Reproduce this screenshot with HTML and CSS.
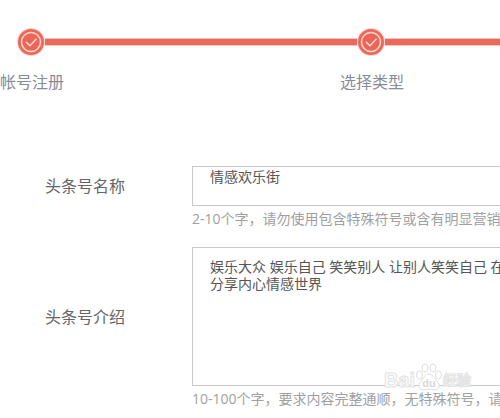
FILE: index.html
```html
<!DOCTYPE html>
<html lang="zh-CN">
<head>
<meta charset="UTF-8">
<meta name="viewport" content="width=device-width, initial-scale=1.0">
<title>头条号注册</title>
<link rel="stylesheet" href="styles.css">
</head>
<body>
<ol class="steps">
<li class="step">
<div class="step-line">
<svg class="step-icon" viewBox="0 0 28 28" aria-hidden="true">
<circle cx="14" cy="14" r="14" fill="#fbd3cd"/>
<circle cx="14" cy="14" r="13" fill="#e96a5d"/>
<circle cx="14" cy="14" r="9.5" fill="#ee6456" stroke="#ffd9cc" stroke-width="1.5"/>
<path d="M9 14l4 3.8 6.5-7" fill="none" stroke="#ffe0d8" stroke-width="1.5"/>
</svg>
</div>
<span class="step-name">帐号注册</span>
</li>
<li class="step">
<div class="step-line">
<svg class="step-icon" viewBox="0 0 28 28" aria-hidden="true">
<circle cx="14" cy="14" r="14" fill="#fbd3cd"/>
<circle cx="14" cy="14" r="13" fill="#e96a5d"/>
<circle cx="14" cy="14" r="9.5" fill="#ee6456" stroke="#ffd9cc" stroke-width="1.5"/>
<path d="M9 14l4 3.8 6.5-7" fill="none" stroke="#ffe0d8" stroke-width="1.5"/>
</svg>
</div>
<span class="step-name">选择类型</span>
</li>
</ol>

<form class="form">
<label class="form-label" for="name">头条号名称</label>
<input class="field" type="text" id="name" value="情感欢乐街">
<p class="hint">2-10个字，请勿使用包含特殊符号或含有明显营销</p>

<label class="form-label" for="intro">头条号介绍</label>
<div class="intro-box">
<textarea class="field intro" id="intro">娱乐大众 娱乐自己 笑笑别人 让别人笑笑自己 在
分享内心情感世界</textarea>
<div class="watermark">
<span>Bai</span>
<svg class="paw" viewBox="0 0 28 28" aria-hidden="true">
<g fill="#fff" stroke="#dedede">
<ellipse cx="4.500" cy="12" rx="3" ry="4"/>
<ellipse cx="10" cy="5" rx="3" ry="4"/>
<ellipse cx="18" cy="5" rx="3" ry="4"/>
<ellipse cx="23.500" cy="12" rx="3" ry="4"/>
<path d="M14 11c4 0 5 4 8 7 4 4 2 9-3 9-2 0-3-1-5-1s-3 1-5 1c-5 0-7-5-3-9 3-3 4-7 8-7z"/>
</g>
<text class="paw-text" x="14" y="24" text-anchor="middle">du</text>
</svg>
<span class="watermark-cn">经验</span>
</div>
</div>
<p class="hint">10-100个字，要求内容完整通顺，无特殊符号，请</p>
</form>
</body>
</html>
```

FILE: styles.css
```css
* {
box-sizing: border-box;
}
body {
margin: 0;
padding-top: 28px;
background-color: #fff;
font-family: "Open Sans", "Noto Sans CJK SC", sans-serif;
font-size: 14px;
color: #555;
overflow-x: hidden;
}
.steps {
display: flex;
margin: 0 0 72px;
padding: 0;
list-style: none;
}
.step {
flex: 1;
}
.step:first-child {
flex: 0 0 68%;
}
.step-line {
display: flex;
align-items: center;
}
.step-line::before,
.step-line::after {
content: "";
height: 6px;
background-color: #e96a5d;
border: solid #f9c3bb;
border-width: 1px 0;
}
.step-line::before {
width: 17px;
}
.step-line::after {
flex: 1;
}
.step:first-child .step-line::before {
visibility: hidden;
}
.step-icon {
width: 28px;
height: 28px;
}
.step-name {
display: block;
margin-top: 14px;
font-size: 16px;
line-height: 24px;
color: #868c98;
}
.form {
display: grid;
grid-template-columns: 192px 1fr;
align-items: center;
}
.form-label {
padding: 0 0 2px 45px;
font-size: 16px;
color: #666;
}
.field {
display: block;
width: 100%;
height: 40px;
margin: 0;
padding: 0 0 20px 17px;
border: 1px solid #c8c8c8;
border-right: none;
border-radius: 0;
background-color: #fff;
font-family: inherit;
font-size: 14px;
color: #555;
outline: none;
}
.intro {
height: 139px;
padding: 10px 0 0 17px;
line-height: 17px;
white-space: pre;
overflow: hidden;
resize: none;
}
.hint {
grid-column: 2;
margin: 0 0 15px;
line-height: 26px;
color: #a0a0a0;
white-space: nowrap;
overflow: hidden;
}
.intro-box {
position: relative;
}
/* sits over the lower border of the text box */
.watermark {
position: absolute;
right: 29px;
bottom: -5px;
display: flex;
align-items: flex-end;
font-family: "Liberation Sans", "Noto Sans CJK SC", sans-serif;
font-size: 20px;
font-weight: bold;
line-height: 22px;
color: #fff;
-webkit-text-stroke: 1px #e2e2e2;
pointer-events: none;
}
.paw {
width: 28px;
height: 28px;
}
.paw-text {
font-size: 11px;
fill: #d8d8d8;
-webkit-text-stroke: 0;
}
.watermark-cn {
font-size: 14px;
}
```
